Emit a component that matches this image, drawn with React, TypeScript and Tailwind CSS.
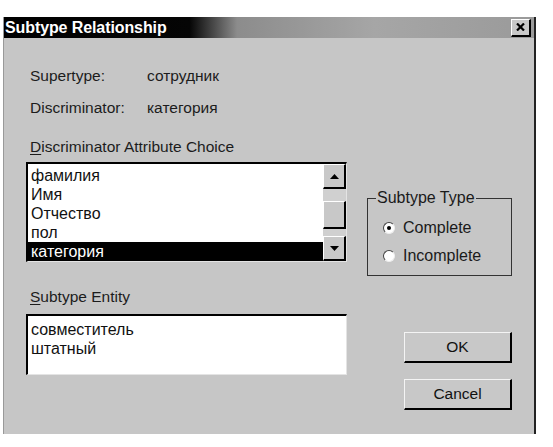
import React from "react";

const attributes = ["фамилия", "Имя", "Отчество", "пол", "категория"];
const entities = ["совместитель", "штатный"];

function Arrow({ up }: { up: boolean }) {
    return (
        <svg width="9" height="5" viewBox="0 0 9 5">
            <path d={up ? "M0 5 L4.5 0 L9 5 Z" : "M0 0 L4.5 5 L9 0 Z"} fill="#000" />
        </svg>
    );
}

function ScrollButton({ up }: { up: boolean }) {
    return (
        <div className="h-[25px] flex items-center justify-center bg-[#c8c8c8] border-t border-l border-t-white border-l-white border-r-2 border-b-2 border-r-black border-b-black">
            <Arrow up={up} />
        </div>
    );
}

function AttributeList({ selected }: { selected: string }) {
    return (
        <div className="flex h-[100px] w-[321px] bg-white border-t-2 border-l-2 border-black border-r border-b border-r-[#e4e4e4] border-b-[#e4e4e4]">
            <div className="flex-1 pt-[2px]">
                {attributes.map(a => (
                    <div
                        key={a}
                        className={`h-[19px] leading-[19px] pl-[3px] text-[16px] ${a === selected ? 'bg-black text-white' : 'text-[#111]'}`}
                    >
                        {a}
                    </div>
                ))}
            </div>
            <div className="w-[23px] flex flex-col bg-[#d0d0d0]">
                <ScrollButton up />
                <div className="mt-[12px] h-[28px] bg-[#c8c8c8] border-t border-l border-t-white border-l-white border-r-2 border-b-2 border-r-black border-b-black" />
                <div className="flex-1" />
                <ScrollButton up={false} />
            </div>
        </div>
    );
}

function Radio({ label, checked }: { label: string; checked: boolean }) {
    return (
        <div className="flex items-center gap-[8px] h-[18px]">
            <div className="w-[12px] h-[12px] rounded-full bg-white border border-t-[#444] border-l-[#444] border-r-[#eee] border-b-[#eee] flex items-center justify-center">
                {checked && <div className="w-[4px] h-[4px] rounded-full bg-black" />}
            </div>
            <span className="text-[16px] text-[#1a1a1a]">{label}</span>
        </div>
    );
}

function Button({ label }: { label: string }) {
    return (
        <button className="w-[108px] h-[31px] bg-[#c8c8c8] text-[15.5px] text-[#111] border-t border-l border-t-[#f4f4f4] border-l-[#f4f4f4] border-r-2 border-b-2 border-r-black border-b-black">
            {label}
        </button>
    );
}

export default function App() {
    return (
        <div className="w-[553px] h-[447px] bg-white pt-[17px] pl-[3px] font-['Liberation_Sans',Arial,sans-serif]">
            <div className="w-[533px] h-[417px] bg-[#c6c6c6] border-l border-l-[#999] border-r-2 border-r-[#222] flex flex-col">
                <div className="h-[21px] flex items-center justify-between pl-[1px] pr-[3px] bg-[linear-gradient(to_right,#000_0%,#050505_35%,#8c8c8c_44%,#a6a6a6_70%,#9a9a9a_100%)]">
                    <span className="text-white font-bold text-[16px] leading-[20px] tracking-[-0.1px]">Subtype Relationship</span>
                    <div className="w-[20px] h-[18px] bg-[#c8c8c8] flex items-center justify-center border-t border-l border-t-white border-l-white border-r-2 border-b-2 border-r-black border-b-black">
                        <svg width="9" height="8" viewBox="0 0 9 8">
                            <path d="M1 0.5 L8 7.5 M8 0.5 L1 7.5" stroke="#000" strokeWidth="2.2" />
                        </svg>
                    </div>
                </div>

                <div className="flex pl-[22px]">
                    <div className="flex flex-col w-[321px]">
                        <div className="mt-[29px] flex pl-[4px] text-[15.5px] leading-[18px] text-[#1c1c1c]">
                            <span className="w-[117px]">Supertype:</span>
                            <span>сотрудник</span>
                        </div>
                        <div className="mt-[14px] flex pl-[4px] text-[15.5px] leading-[18px] text-[#1c1c1c]">
                            <span className="w-[117px]">Discriminator:</span>
                            <span>категория</span>
                        </div>
                        <div className="mt-[21px] pl-[4px] text-[15.5px] leading-[18px] text-[#1c1c1c]">
                            <span className="underline underline-offset-2">D</span>iscriminator Attribute Choice
                        </div>
                        <div className="mt-[6px]">
                            <AttributeList selected="категория" />
                        </div>
                        <div className="mt-[26px] pl-[4px] text-[15.5px] leading-[18px] text-[#1c1c1c]">
                            <span className="underline underline-offset-2">S</span>ubtype Entity
                        </div>
                        <div className="mt-[8px] h-[61px] w-[321px] bg-white pt-[4px] pl-[3px] border-t-2 border-l-2 border-black border-r border-b border-r-[#e4e4e4] border-b-[#e4e4e4]">
                            {entities.map(e => (
                                <div key={e} className="h-[19px] leading-[19px] text-[16px] text-[#111]">{e}</div>
                            ))}
                        </div>
                    </div>

                    <div className="ml-[20px] w-[145px] flex flex-col">
                        <div className="mt-[160px] h-[78px] border border-[#333] pl-[15px]">
                            <div className="-mt-[10px] -ml-[7px] w-fit px-[1px] bg-[#c6c6c6] text-[16px] leading-[18px] text-[#1a1a1a]">Subtype Type</div>
                            <div className="mt-[12px] flex flex-col gap-[10px]">
                                <Radio label="Complete" checked />
                                <Radio label="Incomplete" checked={false} />
                            </div>
                        </div>
                        <div className="mt-[56px] self-end flex flex-col gap-[16px]">
                            <Button label="OK" />
                            <Button label="Cancel" />
                        </div>
                    </div>
                </div>
            </div>
        </div>
    );
}
